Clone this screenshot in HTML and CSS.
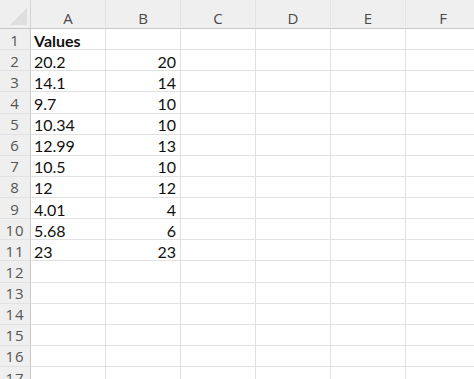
FILE: index.html
```html
<!DOCTYPE html>
<html lang="en">
<head>
    <meta charset="UTF-8">
    <title>Values</title>
    <link rel="stylesheet" href="styles.css">
</head>
<body>
    <div class="sheet">
        <div class="corner"><span class="tri"></span></div>
        <div class="colhead">A</div>
        <div class="colhead">B</div>
        <div class="colhead">C</div>
        <div class="colhead">D</div>
        <div class="colhead">E</div>
        <div class="colhead">F</div>

        <div class="rowhead">1</div><div class="cell bold">Values</div><div class="cell"></div><div class="cell"></div><div class="cell"></div><div class="cell"></div><div class="cell"></div>
        <div class="rowhead">2</div><div class="cell">20.2</div><div class="cell num">20</div><div class="cell"></div><div class="cell"></div><div class="cell"></div><div class="cell"></div>
        <div class="rowhead">3</div><div class="cell">14.1</div><div class="cell num">14</div><div class="cell"></div><div class="cell"></div><div class="cell"></div><div class="cell"></div>
        <div class="rowhead">4</div><div class="cell">9.7</div><div class="cell num">10</div><div class="cell"></div><div class="cell"></div><div class="cell"></div><div class="cell"></div>
        <div class="rowhead">5</div><div class="cell">10.34</div><div class="cell num">10</div><div class="cell"></div><div class="cell"></div><div class="cell"></div><div class="cell"></div>
        <div class="rowhead">6</div><div class="cell">12.99</div><div class="cell num">13</div><div class="cell"></div><div class="cell"></div><div class="cell"></div><div class="cell"></div>
        <div class="rowhead">7</div><div class="cell">10.5</div><div class="cell num">10</div><div class="cell"></div><div class="cell"></div><div class="cell"></div><div class="cell"></div>
        <div class="rowhead">8</div><div class="cell">12</div><div class="cell num">12</div><div class="cell"></div><div class="cell"></div><div class="cell"></div><div class="cell"></div>
        <div class="rowhead">9</div><div class="cell">4.01</div><div class="cell num">4</div><div class="cell"></div><div class="cell"></div><div class="cell"></div><div class="cell"></div>
        <div class="rowhead">10</div><div class="cell">5.68</div><div class="cell num">6</div><div class="cell"></div><div class="cell"></div><div class="cell"></div><div class="cell"></div>
        <div class="rowhead">11</div><div class="cell">23</div><div class="cell num">23</div><div class="cell"></div><div class="cell"></div><div class="cell"></div><div class="cell"></div>
        <div class="rowhead">12</div><div class="cell"></div><div class="cell"></div><div class="cell"></div><div class="cell"></div><div class="cell"></div><div class="cell"></div>
        <div class="rowhead">13</div><div class="cell"></div><div class="cell"></div><div class="cell"></div><div class="cell"></div><div class="cell"></div><div class="cell"></div>
        <div class="rowhead">14</div><div class="cell"></div><div class="cell"></div><div class="cell"></div><div class="cell"></div><div class="cell"></div><div class="cell"></div>
        <div class="rowhead">15</div><div class="cell"></div><div class="cell"></div><div class="cell"></div><div class="cell"></div><div class="cell"></div><div class="cell"></div>
        <div class="rowhead">16</div><div class="cell"></div><div class="cell"></div><div class="cell"></div><div class="cell"></div><div class="cell"></div><div class="cell"></div>
        <div class="rowhead">17</div><div class="cell"></div><div class="cell"></div><div class="cell"></div><div class="cell"></div><div class="cell"></div><div class="cell"></div>
    </div>
</body>
</html>
```

FILE: styles.css
```css
body {
    margin: 0;
    background-color: #fff;
    overflow: hidden;
    font-family: Lato, "Open Sans", sans-serif;
}

.sheet {
    display: grid;
    grid-template-columns: 31px repeat(6, 75px);
    grid-template-rows: 29px;
    grid-auto-rows: 21.125px;
}

.corner,
.colhead {
    position: relative;
    background-color: #efefef;
    border-bottom: 1px solid #c6c6c6;
    box-sizing: border-box;
}

.corner {
    border-right: 1px solid #d4d4d4;
}

.tri {
    position: absolute;
    right: 3px;
    bottom: 3px;
    width: 0;
    height: 0;
    border-left: 17px solid transparent;
    border-bottom: 17px solid #dedede;
}

.colhead {
    display: flex;
    align-items: center;
    justify-content: center;
    padding-top: 7px;
    color: #4a4a4a;
    font-family: "Open Sans", sans-serif;
    font-size: 15px;
    border-right: 1px solid #e4e4e4;
}

.rowhead {
    display: flex;
    align-items: center;
    justify-content: center;
    padding-top: 1px;
    background-color: #efefef;
    color: #555;
    font-family: "Open Sans", sans-serif;
    font-size: 15px;
    letter-spacing: 1px;
    border-right: 1px solid #c9c9c9;
    border-bottom: 1px solid #e2e2e2;
    box-sizing: border-box;
}

.cell {
    display: flex;
    align-items: center;
    padding: 2px 4px 0 3px;
    color: #111;
    font-size: 16px;
    border-right: 1px solid #e1e1e1;
    border-bottom: 1px solid #e1e1e1;
    box-sizing: border-box;
    white-space: nowrap;
}

.bold {
    font-weight: bold;
}

.num {
    justify-content: flex-end;
}
```
